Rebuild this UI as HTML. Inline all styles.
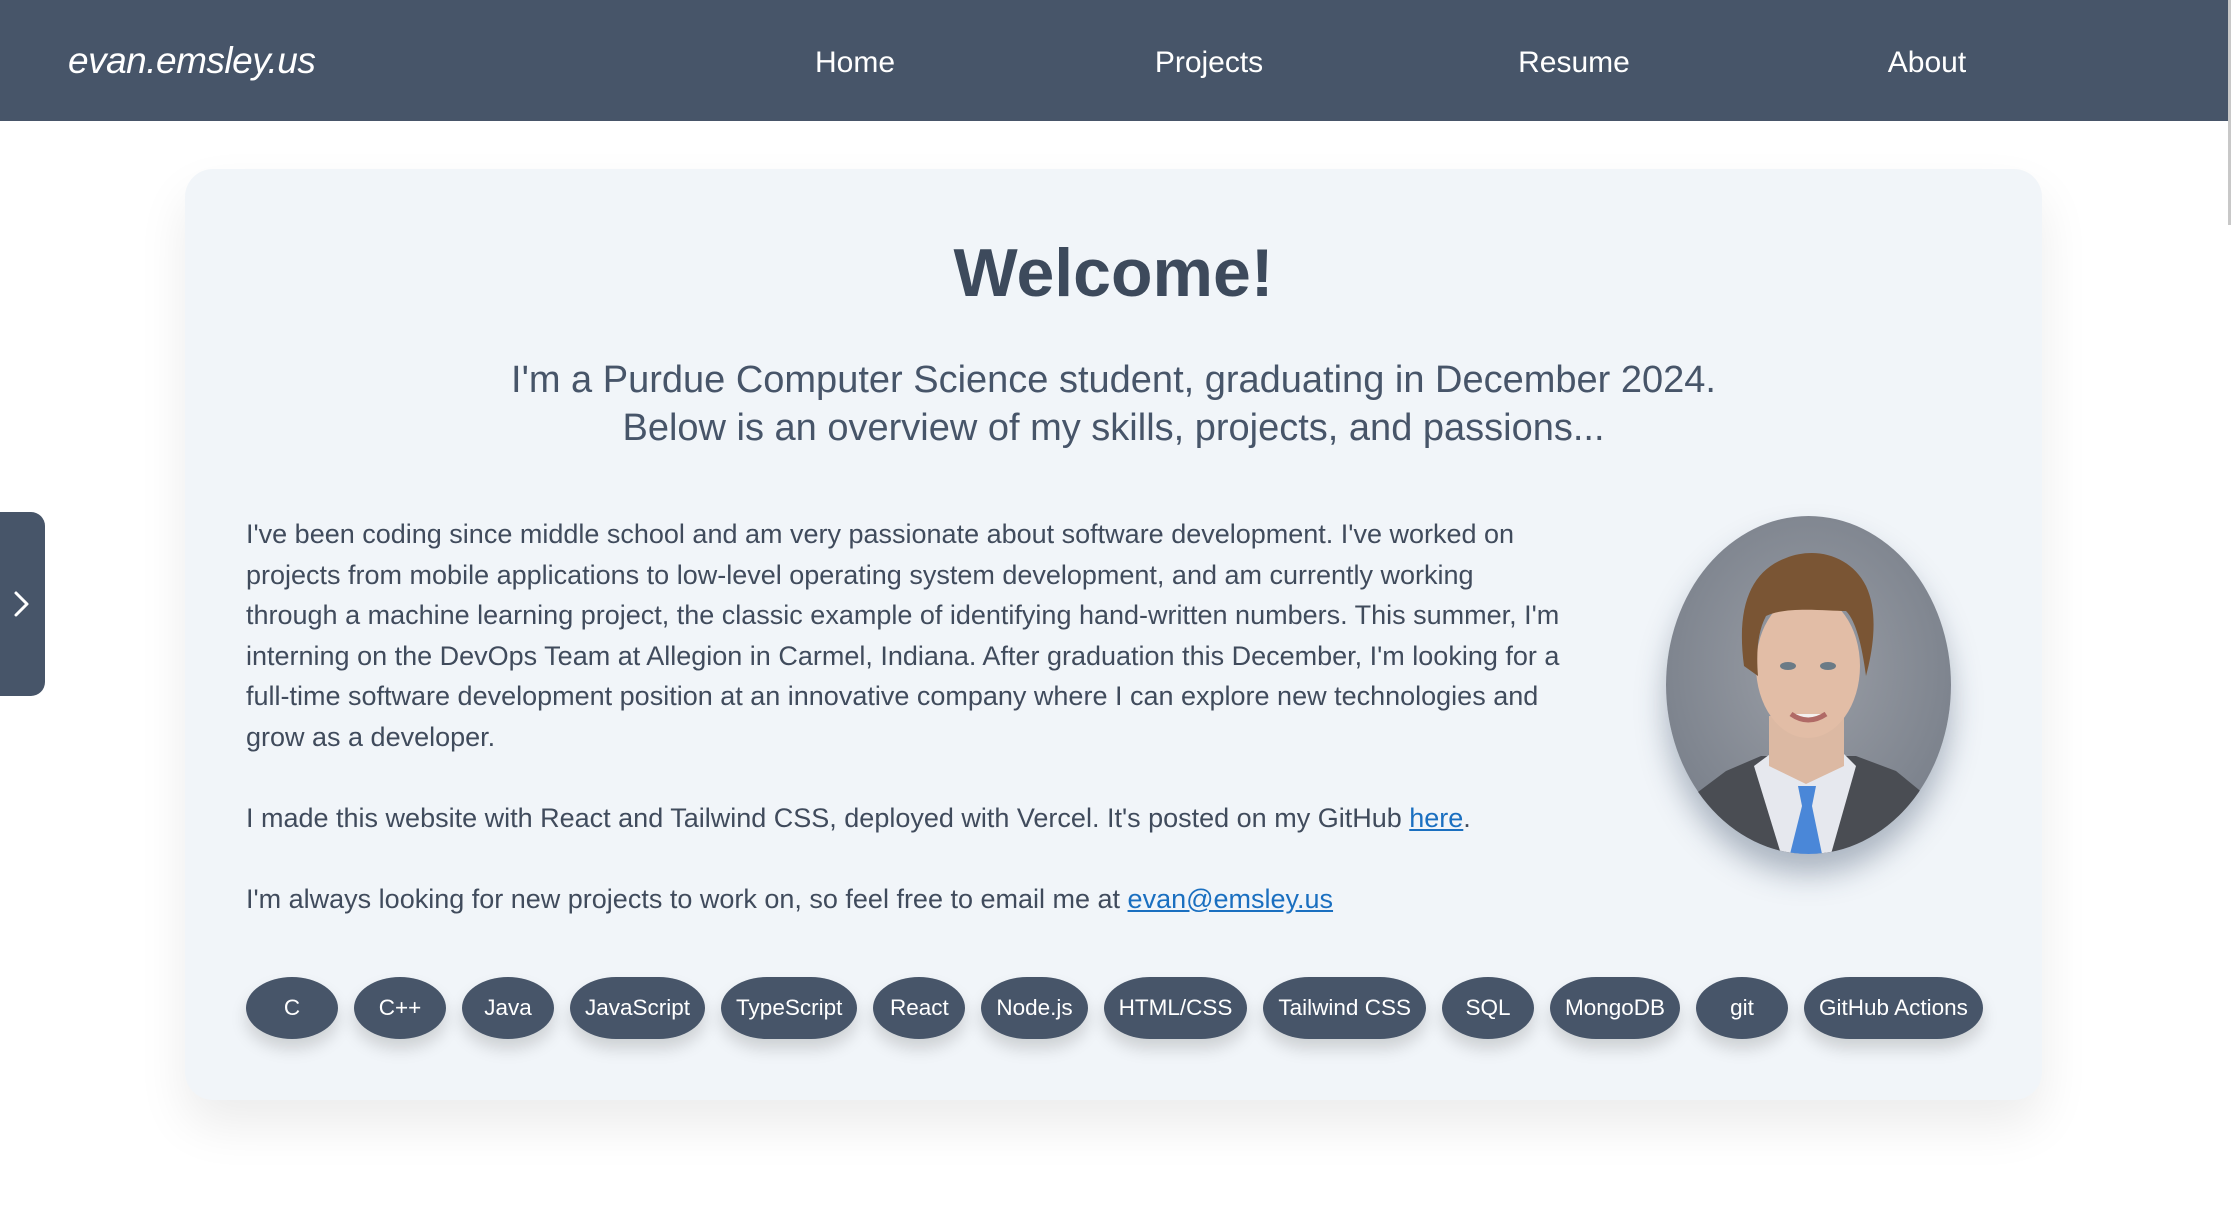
<!DOCTYPE html>
<html><head><meta charset="utf-8"><style>
*{margin:0;padding:0;box-sizing:border-box}
body{width:2231px;height:1205px;overflow:hidden;background:#fff;font-family:"Liberation Sans","DejaVu Sans",sans-serif;position:relative}
nav{position:absolute;left:0;top:0;width:2228px;height:121px;background:#475569;color:#fff}
.logo{position:absolute;left:68px;top:40px;font-size:37px;font-style:italic;letter-spacing:-0.5px}
.nl{position:absolute;top:46px;font-size:30px;transform:translateX(-50%)}
.sb{position:absolute;right:0;top:0;width:3px;height:225px;background:#c8c8c8}
.card{position:absolute;left:185px;top:169px;width:1857px;height:931px;background:#f1f5f9;border-radius:28px;box-shadow:0 25px 50px rgba(0,0,0,0.08)}
h1{position:absolute;top:234px;text-align:center;font-size:68px;font-weight:bold;color:#3d4a5c}
.sub{position:absolute;top:356px;text-align:center;font-size:38px;line-height:48px;color:#475569}
.txt{position:absolute;left:246px;top:514px;font-size:27px;line-height:40.5px;color:#404b5c;white-space:nowrap}
.txt p{margin-bottom:40.5px}
a{color:#1a6fc0;text-decoration:underline}
.chips{position:absolute;left:246px;top:977px;display:flex;gap:16px}
.chip{height:62px;min-width:92px;padding:0 15px;background:#475569;color:#fff;font-size:22.5px;display:flex;align-items:center;justify-content:center;border-radius:46px/31px;box-shadow:0 10px 16px rgba(0,0,0,0.15)}
.tab{position:absolute;left:0;top:512px;width:45px;height:184px;background:#475569;border-radius:0 14px 14px 0}
.photo{position:absolute;left:1666px;top:516px;width:285px;height:338px;border-radius:50%;overflow:hidden;box-shadow:0 20px 30px rgba(40,60,90,0.35)}
</style></head><body>
<nav><div class="logo">evan.emsley.us</div>
<div class="nl" style="left:855px">Home</div><div class="nl" style="left:1209px">Projects</div><div class="nl" style="left:1574px">Resume</div><div class="nl" style="left:1927px">About</div></nav>
<div class="sb"></div>
<div class="card"></div>
<h1 style="left:185px;width:1857px">Welcome!</h1>
<div class="sub" style="left:185px;width:1857px">I'm a Purdue Computer Science student, graduating in December 2024.<br>Below is an overview of my skills, projects, and passions...</div>
<div class="txt">
<p>I've been coding since middle school and am very passionate about software development. I've worked on<br>projects from mobile applications to low-level operating system development, and am currently working<br>through a machine learning project, the classic example of identifying hand-written numbers. This summer, I'm<br>interning on the DevOps Team at Allegion in Carmel, Indiana. After graduation this December, I'm looking for a<br>full-time software development position at an innovative company where I can explore new technologies and<br>grow as a developer.</p>
<p>I made this website with React and Tailwind CSS, deployed with Vercel. It's posted on my GitHub <a>here</a>.</p>
<p>I'm always looking for new projects to work on, so feel free to email me at <a>evan@emsley.us</a></p>
</div>
<div class="photo"><svg width="285" height="338" viewBox="0 0 285 338">
<defs><radialGradient id="bg" cx="0.5" cy="0.45" r="0.7"><stop offset="0" stop-color="#9a9ea6"/><stop offset="1" stop-color="#737a85"/></radialGradient></defs>
<rect width="285" height="338" fill="url(#bg)"/>
<path d="M0 338 L0 300 L60 255 L95 240 L190 240 L230 255 L285 300 L285 338Z" fill="#4a4d53"/>
<path d="M88 250 L115 230 L170 230 L190 250 L165 338 L115 338Z" fill="#e6e8ee"/>
<path d="M132 270 L150 270 L146 290 L156 338 L124 338 L136 290Z" fill="#4a87d8"/>
<path d="M103 200 L103 250 L140 268 L178 250 L178 200Z" fill="#dcb9a3"/>
<ellipse cx="142" cy="150" rx="52" ry="72" fill="#e2bda6"/>
<path d="M78 150 C70 90 85 55 120 42 C150 30 185 40 200 70 C212 95 208 130 200 160 C196 130 190 105 180 95 C160 95 120 90 100 100 C92 115 90 135 92 160 Z" fill="#7a5534"/>
<ellipse cx="122" cy="150" rx="8" ry="4" fill="#6b7b86"/><ellipse cx="162" cy="150" rx="8" ry="4" fill="#6b7b86"/>
<path d="M125 198 Q142 210 160 198" stroke="#b06a66" stroke-width="5" fill="#f4f0ee"/>
</svg></div>
<div class="tab"><svg width="45" height="184" viewBox="0 0 45 184"><path d="M16 81 L27 92 L16 103" stroke="#fff" stroke-width="3" fill="none" stroke-linecap="round" stroke-linejoin="round"/></svg></div>
<div class="chips">
<div class="chip">C</div><div class="chip">C++</div><div class="chip">Java</div><div class="chip">JavaScript</div><div class="chip">TypeScript</div><div class="chip">React</div><div class="chip">Node.js</div><div class="chip">HTML/CSS</div><div class="chip">Tailwind CSS</div><div class="chip">SQL</div><div class="chip">MongoDB</div><div class="chip">git</div><div class="chip">GitHub Actions</div>
</div>
</body></html>
